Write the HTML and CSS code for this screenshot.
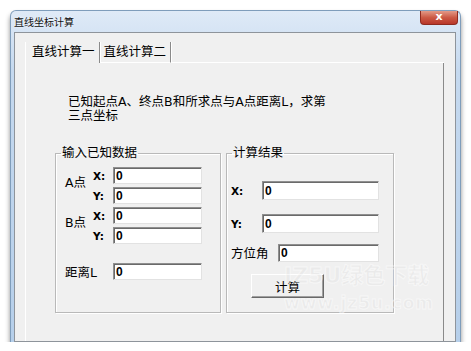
FILE: index.html
```html
<!DOCTYPE html>
<html lang="zh-CN">
<head>
  <meta charset="UTF-8">
  <meta name="viewport" content="width=device-width, initial-scale=1.0">
  <title>直线坐标计算</title>
  <link rel="stylesheet" href="styles.css">
</head>
<body>
  <div class="window">
    <div class="titlebar">
      <span class="title">直线坐标计算</span>
      <span class="close">x</span>
    </div>
    <div class="client">
      <div class="tabs">
        <div class="tab active">直线计算一</div>
        <div class="tab">直线计算二</div>
        <div class="tab-fill"></div>
      </div>
      <div class="page">
        <p class="desc">已知起点A、终点B和所求点与A点距离L，求第<br>三点坐标</p>
        <div class="groups">
          <fieldset class="group known">
            <legend>输入已知数据</legend>
            <div class="fields">
              <span class="pt">A点</span>
              <span class="axis">X:</span><input type="text" value="0">
              <span class="axis">Y:</span><input type="text" value="0">
              <span class="pt">B点</span>
              <span class="axis">X:</span><input type="text" value="0">
              <span class="axis">Y:</span><input type="text" value="0">
              <span class="dist gap-top">距离L</span><input class="gap-top" type="text" value="0">
            </div>
          </fieldset>
          <fieldset class="group result">
            <legend>计算结果</legend>
            <div class="results">
              <div class="row">
                <span class="axis wide">X:</span><input class="tall" type="text" value="0">
              </div>
              <div class="row row-y">
                <span class="axis wide">Y:</span><input class="tall" type="text" value="0">
              </div>
              <div class="row row-angle">
                <span class="angle">方位角</span><input type="text" value="0">
              </div>
              <button class="calc" type="button">计算</button>
            </div>
          </fieldset>
        </div>
        <div class="watermark">IZ5U绿色下载<br><span>www.jz5u.com</span></div>
      </div>
    </div>
  </div>
</body>
</html>
```

FILE: styles.css
```css
/* Page */
* {
  box-sizing: border-box;
}
body {
  margin: 0;
  background: #fff;
  font-family: "DejaVu Sans", "Noto Sans CJK SC", sans-serif;
  font-size: 12.5px;
  color: #000;
}

/* Window frame */
.window {
  width: 451px;
  margin: 10px 0 0 10px;
  padding: 0 4px 0 3px;
  border: 1px solid #7f9dbb;
  border-bottom: none;
  border-radius: 6px 6px 0 0;
  background: linear-gradient(to bottom, #dfeaf7, #c5d9ef 60px, #b6cfea);
  box-shadow: 0 4px 5px rgba(0, 0, 0, 0.45);
}
.titlebar {
  display: flex;
  align-items: center;
  height: 21px;
}
.title {
  font-size: 10px;
  color: #111;
  text-shadow: 0 0 3px #fff;
}
.close {
  align-self: flex-start;
  margin-left: auto;
  margin-right: -2px;
  width: 38px;
  height: 14px;
  border: 1px solid #8e2b20;
  border-top: none;
  border-radius: 0 0 4px 4px;
  background: linear-gradient(to bottom, #e39a88, #cc5a45 50%, #b8372a);
  color: #fff;
  font: bold 11px "DejaVu Sans", sans-serif;
  line-height: 12px;
  text-align: center;
}

/* Client area */
.client {
  display: flex;
  flex-direction: column;
  height: 310px;
  padding: 9px 11px 0 10px;
  border: 1px solid #8e949b;
  background: #f0f0f0;
}

/* Tabs */
.tabs {
  display: flex;
  height: 21px;
}
.tab {
  padding: 0 4px;
  line-height: 20px;
  border-right: 1px solid #8a8a8a;
  box-shadow: 1px 0 #fff;
  border-bottom: 1px solid #fff;
}
.tab.active {
  padding-left: 6px;
  border-left: 1px solid #fff;
  border-bottom: none;
}
.tab-fill {
  flex: 1;
  border-bottom: 1px solid #fff;
}
.page {
  position: relative;
  flex: 1;
  padding: 32px 0 0 29px;
  border-left: 1px solid #fff;
  border-right: 1px solid #8a8a8a;
}
.desc {
  margin: 0 0 0 13px;
  line-height: 14px;
}

/* Group boxes */
.groups {
  display: flex;
  gap: 5px;
  margin-top: 22px;
}
.group {
  min-width: 0;
  height: 168px;
  margin: 0;
  padding: 0;
  border: 1px solid #b9b9b9;
  box-shadow: inset 1px 1px #fff, 1px 1px #fff;
}
.group legend {
  margin-left: 5px;
  padding: 0 1px;
  line-height: 16px;
}
.known {
  width: 166px;
}
.result {
  width: 168px;
}
.fields {
  display: grid;
  grid-template-columns: 28px 20px 89px;
  row-gap: 3px;
  align-items: center;
  padding: 6px 0 0 9px;
}
.pt {
  grid-row: span 2;
  margin-bottom: 9px;
}
.axis {
  font: bold 10.5px "DejaVu Sans", sans-serif;
}
.dist {
  grid-column: span 2;
}
.gap-top {
  margin-top: 15px;
}
input {
  width: 100%;
  height: 17px;
  margin: 0;
  padding: 0 0 0 2px;
  border: 1px solid;
  border-color: #8f8f8f #e2e2e2 #e2e2e2 #8f8f8f;
  box-shadow: inset 1px 1px #6a6a6a;
  background: #fff;
  font: bold 12px "Liberation Sans", sans-serif;
  color: #000;
}
.results {
  padding: 20px 14px 0 4px;
}
.row {
  display: flex;
  align-items: center;
}
.row input {
  flex: 1;
  width: auto;
  min-width: 0;
}
.axis.wide {
  width: 31px;
}
input.tall {
  height: 19px;
}
.row-y {
  margin-top: 14px;
}
.row-angle {
  margin-top: 10px;
}
.row-angle input {
  height: 18px;
}
.angle {
  width: 47px;
}
.calc {
  display: block;
  width: 73px;
  height: 24px;
  margin: 12px 0 0 20px;
  padding: 0;
  border: 1px solid;
  border-color: #fff #696969 #696969 #fff;
  box-shadow: inset -1px -1px #a0a0a0;
  background: #f0f0f0;
  font: 12.5px "Noto Sans CJK SC", sans-serif;
  color: #000;
}

/* Faint download-site watermark */
.watermark {
  position: absolute;
  left: 258px;
  top: 200px;
  white-space: nowrap;
  font: bold 22px "DejaVu Sans", "Noto Sans CJK SC", sans-serif;
  line-height: 26px;
  color: rgba(205, 205, 205, 0.18);
  -webkit-text-stroke: 1px rgba(255, 255, 255, 0.55);
  pointer-events: none;
}
.watermark span {
  font-size: 17px;
  letter-spacing: 1px;
}
```
